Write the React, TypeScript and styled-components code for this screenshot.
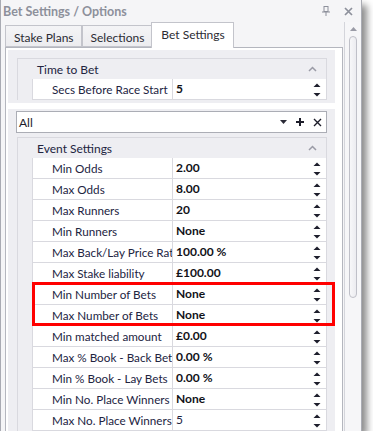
import React from 'react';
import styled, { createGlobalStyle } from 'styled-components';

const GlobalStyle = createGlobalStyle`
    html, body {
        margin: 0;
        padding: 0;
        background: #ffffff;
    }
    body {
        font-family: Lato, "Open Sans", "Noto Sans", sans-serif;
        font-size: 11.5px;
    }
`;

const Window = styled.div`
    width: 362px;
    height: 431px;
    box-sizing: border-box;
    border-left: 1px solid #a9abb3;
    border-right: 1px solid #a9abb3;
    background: #f5f5f7;
    display: flex;
    flex-direction: column;
    overflow: hidden;
    box-shadow: 5px 5px 7px rgba(0, 0, 0, 0.45);
`;

const TitleBar = styled.div`
    height: 22px;
    flex: none;
    display: flex;
    align-items: center;
    padding: 0 8px 0 2px;
    gap: 14px;
`;

const Title = styled.div`
    flex: 1;
    font-weight: 700;
    font-size: 12.5px;
    color: #8d909b;
    white-space: nowrap;
`;

const Body = styled.div`
    flex: 1;
    min-height: 0;
    display: flex;
`;

const Main = styled.div`
    flex: 1;
    min-width: 0;
    display: flex;
    flex-direction: column;
    padding-left: 4px;
    margin-right: 1px;
`;

const TabStrip = styled.div`
    height: 25px;
    flex: none;
    display: flex;
    align-items: flex-end;
    position: relative;
    z-index: 1;
`;

const Tab = styled.div<{ $active?: boolean }>`
    box-sizing: border-box;
    height: ${p => (p.$active ? '26px' : '22px')};
    margin-bottom: ${p => (p.$active ? '-1px' : '0')};
    margin-left: ${p => (p.$active ? '-1px' : '0')};
    padding: ${p => (p.$active ? '4px 8px 0 9px' : '4px 7px 0 8px')};
    border: 1px solid #c3c4cb;
    border-bottom: ${p => (p.$active ? 'none' : '1px solid #c3c4cb')};
    background: ${p => (p.$active ? '#ffffff' : 'linear-gradient(#f4f4f6, #ececef)')};
    color: #2b2b33;
    font-size: 12px;
    white-space: nowrap;
    & + & {
        border-left: ${p => (p.$active ? '1px solid #c3c4cb' : 'none')};
    }
`;

const Panel = styled.div`
    flex: 1;
    min-height: 0;
    border: 1px solid #b4b6be;
    border-bottom: none;
    background: #ffffff;
    padding: 2px 7px 0 2px;
    display: flex;
    flex-direction: column;
    gap: 6px;
    overflow: hidden;
`;

const Grid = styled.div<{ $pad: string }>`
    background: #eeeef2;
    padding: ${p => p.$pad};
    flex: none;
`;

const Group = styled.div`
    border: 1px solid #d9d9df;
    border-bottom: none;
    margin: 0 0 0 1px;
`;

const CategoryHeader = styled.div`
    height: 20px;
    display: flex;
    align-items: center;
    justify-content: space-between;
    padding: 0 9px 0 19px;
    color: #22243f;
    font-size: 12px;
`;

const Row = styled.div`
    display: grid;
    grid-template-columns: 14px 140px 1fr;
    height: 21px;
`;

const Indent = styled.div`
    background: #eeeef2;
`;

const Label = styled.div`
    box-sizing: border-box;
    background: #ffffff;
    border-left: 1px solid #d9d9df;
    border-bottom: 1px solid #d9d9df;
    padding-left: 19px;
    line-height: 20px;
    color: #22243f;
    white-space: nowrap;
    overflow: hidden;
    font-size: 11.7px;
`;

const Value = styled.div<{ $plain?: boolean }>`
    box-sizing: border-box;
    background: #ffffff;
    border-left: 1px solid #d9d9df;
    border-bottom: 1px solid #d9d9df;
    padding: 0 5px 0 3px;
    display: flex;
    align-items: flex-start;
    justify-content: space-between;
    line-height: 20px;
    font-weight: ${p => (p.$plain ? 400 : 700)};
    color: ${p => (p.$plain ? '#22243f' : '#111118')};
    font-size: 12px;
    white-space: nowrap;
`;

const Spin = styled.svg`
    margin-top: 4px;
    flex: none;
`;

const Highlight = styled.div`
    position: relative;
    &::after {
        content: '';
        position: absolute;
        left: 14px;
        right: -9px;
        top: -2px;
        bottom: 0;
        border: 3px solid #ff0000;
        pointer-events: none;
    }
`;

const Combo = styled.div`
    box-sizing: border-box;
    height: 22px;
    margin: 0 0 4px 0;
    border: 1px solid #abadb5;
    background: #ffffff;
    display: flex;
    align-items: center;
    padding: 0 4px 0 2px;
    color: #1d1d2a;
    font-size: 12px;
`;

const ComboText = styled.span`
    flex: 1;
`;

const ComboIcons = styled.div`
    display: flex;
    align-items: center;
    gap: 9px;
`;

const ScrollBar = styled.div`
    width: 17px;
    flex: none;
    box-sizing: border-box;
    border-left: 1px solid #d4d5db;
    background: #f6f6f8;
    display: flex;
    flex-direction: column;
    align-items: center;
    padding-top: 5px;
`;

const Thumb = styled.div`
    margin-top: 5px;
    width: 8px;
    height: 262px;
    box-sizing: border-box;
    border: 1px solid #bfc0c8;
    border-radius: 4px;
    background: linear-gradient(90deg, #f7f7f9, #ececf0);
`;

type Prop = { label: string; value: string; plain?: boolean };

const eventRows: Prop[] = [
    { label: 'Min Odds', value: '2.00' },
    { label: 'Max Odds', value: '8.00' },
    { label: 'Max Runners', value: '20' },
    { label: 'Min Runners', value: 'None' },
    { label: 'Max Back/Lay Price Ratio', value: '100.00 %' },
    { label: 'Max Stake liability', value: '£100.00' },
    { label: 'Min Number of Bets', value: 'None' },
    { label: 'Max Number of Bets', value: 'None' },
    { label: 'Min matched amount', value: '£0.00' },
    { label: 'Max % Book - Back Bets', value: '0.00 %' },
    { label: 'Min % Book - Lay Bets', value: '0.00 %' },
    { label: 'Min No. Place Winners', value: 'None' },
    { label: 'Max No. Place Winners', value: '5', plain: true },
];

const SpinIcon = () => (
    <Spin width="8" height="14" viewBox="0 0 8 14">
        <polygon points="0.5,4 4,0.5 7.5,4" fill="#1d1e2c" />
        <polygon points="0.5,10 7.5,10 4,13.5" fill="#1d1e2c" />
    </Spin>
);

const Chevron = () => (
    <svg width="9" height="6" viewBox="0 0 9 6">
        <polyline points="1,5 4.5,1.5 8,5" fill="none" stroke="#9a9ba6" strokeWidth="1.5" />
    </svg>
);

const PropRow = ({ label, value, plain }: Prop) => (
    <Row>
        <Indent />
        <Label>{label}</Label>
        <Value $plain={plain}>
            <span>{value}</span>
            <SpinIcon />
        </Value>
    </Row>
);

const App = () => {
    return (
        <>
            <GlobalStyle />
            <Window>
                <TitleBar>
                    <Title>Bet Settings / Options</Title>
                    <svg width="8" height="10" viewBox="0 0 8 10">
                        <rect x="2" y="0.5" width="4" height="5" fill="none" stroke="#8d909b" />
                        <line x1="0" y1="6" x2="8" y2="6" stroke="#8d909b" />
                        <line x1="4" y1="6" x2="4" y2="10" stroke="#8d909b" />
                    </svg>
                    <svg width="9" height="9" viewBox="0 0 9 9">
                        <path d="M1 1 L8 8 M8 1 L1 8" stroke="#8d909b" strokeWidth="1.7" />
                    </svg>
                </TitleBar>
                <Body>
                    <Main>
                        <TabStrip>
                            <Tab>Stake Plans</Tab>
                            <Tab>Selections</Tab>
                            <Tab $active>Bet Settings</Tab>
                        </TabStrip>
                        <Panel>
                            <Grid $pad="8px 8px 3px 8px">
                                <Group>
                                    <CategoryHeader>
                                        <span>Time to Bet</span>
                                        <Chevron />
                                    </CategoryHeader>
                                    <PropRow label="Secs Before Race Start" value="5" />
                                </Group>
                            </Grid>
                            <Grid $pad="2px 8px 0 8px">
                                <Combo>
                                    <ComboText>All</ComboText>
                                    <ComboIcons>
                                        <svg width="7" height="4" viewBox="0 0 7 4">
                                            <polygon points="0,0 7,0 3.5,4" fill="#2a2a36" />
                                        </svg>
                                        <svg width="8" height="8" viewBox="0 0 8 8">
                                            <path d="M4 0 V8 M0 4 H8" stroke="#1d1d2a" strokeWidth="2" />
                                        </svg>
                                        <svg width="9" height="9" viewBox="0 0 9 9">
                                            <path d="M1 1 L8 8 M8 1 L1 8" stroke="#1d1d2a" strokeWidth="1.4" />
                                        </svg>
                                    </ComboIcons>
                                </Combo>
                                <Group>
                                    <CategoryHeader>
                                        <span>Event Settings</span>
                                        <Chevron />
                                    </CategoryHeader>
                                    {eventRows.slice(0, 6).map(r => (
                                        <PropRow key={r.label} {...r} />
                                    ))}
                                    <Highlight>
                                        {eventRows.slice(6, 8).map(r => (
                                            <PropRow key={r.label} {...r} />
                                        ))}
                                    </Highlight>
                                    {eventRows.slice(8).map(r => (
                                        <PropRow key={r.label} {...r} />
                                    ))}
                                </Group>
                            </Grid>
                        </Panel>
                    </Main>
                    <ScrollBar>
                        <svg width="7" height="4" viewBox="0 0 7 4">
                            <polygon points="0,4 3.5,0 7,4" fill="#9a9ba6" />
                        </svg>
                        <Thumb />
                    </ScrollBar>
                </Body>
            </Window>
        </>
    );
};

export default App;
